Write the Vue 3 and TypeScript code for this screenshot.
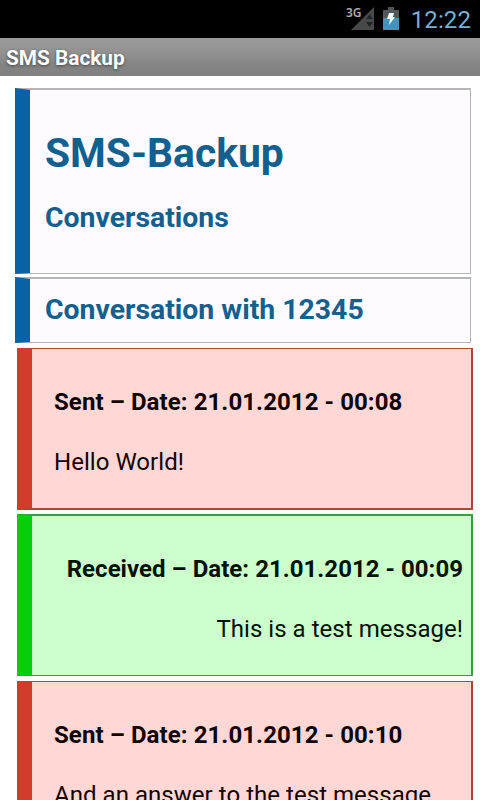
<script setup lang="ts">
interface Message {
  kind: 'sent' | 'received'
  label: string
  date: string
  text: string
}

const messages: Message[] = [
  { kind: 'sent', label: 'Sent', date: '21.01.2012 - 00:08', text: 'Hello World!' },
  { kind: 'received', label: 'Received', date: '21.01.2012 - 00:09', text: 'This is a test message!' },
  { kind: 'sent', label: 'Sent', date: '21.01.2012 - 00:10', text: 'And an answer to the test message' },
]
</script>

<template>
  <div class="screen">
    <div class="status">
      <svg class="signal" width="30" height="28" viewBox="0 0 30 28">
        <path d="M28 2V25H5Z" fill="#484848" />
        <path d="M20 14l3.500-4.500 3.500 4.500zM20 17h7l-3.500 5z" fill="#202426" />
        <text x="0" y="12" class="network">3G</text>
      </svg>
      <svg class="battery" width="16" height="24" viewBox="0 0 16 24">
        <path d="M5 0h6v3h5v8H0V3h5z" fill="#51575a" />
        <path d="M0 11h16v12H0z" fill="#3f96b9" />
        <path d="M6 6h5l-1 4h2l-6 8 1-6H4z" fill="#f4fcff" />
      </svg>
      <span class="clock">12:22</span>
    </div>
    <header class="titlebar"><span>SMS Backup</span></header>
    <main class="page">
      <section class="card intro">
        <h1>SMS-Backup</h1>
        <h2>Conversations</h2>
      </section>
      <section class="card conversation">
        <h2 class="with">Conversation with 12345</h2>
      </section>
      <article v-for="m in messages" :key="m.date" class="message" :class="m.kind">
        <p class="meta">{{ m.label }} – Date: {{ m.date }}</p>
        <p class="body">{{ m.text }}</p>
      </article>
    </main>
  </div>
</template>

<style>
body {
  margin: 0;
  background: #fff;
  overflow: hidden;
}
</style>

<style scoped>
.screen {
  width: 480px;
  height: 800px;
  overflow: hidden;
  background: #fff;
  font-family: Roboto, sans-serif;
  white-space: nowrap;
}
.screen * {
  box-sizing: border-box;
}
.status {
  height: 38px;
  background: #000;
  display: flex;
  justify-content: flex-end;
  padding: 5px 9px 0 0;
}
.signal {
  margin-right: 7px;
}
.network {
  font: 600 12px "Noto Sans", sans-serif;
  fill: #aaa;
}
.battery {
  margin: 2px 12px 0 0;
}
.clock {
  font-size: 24px;
  line-height: 30px;
  letter-spacing: 0.1px;
  color: #78afd2;
}
.titlebar {
  height: 38px;
  padding-left: 6px;
  background: linear-gradient(#9b9b9b, #8e8e8e 50%, #848484 70%, #808080);
  color: #fff;
  font-size: 20.8px;
  font-weight: 700;
  line-height: 40px;
  text-shadow: 0 1px 3px #444;
}
.page {
  padding: 12px 7px 0 15px;
}
h1,
h2,
p {
  margin: 0;
}
.card {
  width: 456px;
  border: 1px solid #b5b5bb;
  border-top-width: 2px;
  border-left: 15px solid #0763a7;
  background: #fdfbff;
  color: #12608f;
  padding-left: 15px;
}
.intro {
  height: 186px;
  padding-top: 38px;
}
.conversation {
  height: 66px;
  margin-top: 3px;
  padding-top: 13px;
}
h1 {
  font-size: 40.8px;
  line-height: 50px;
}
h2 {
  font-size: 28.4px;
  line-height: 36px;
}
.intro h2 {
  margin-top: 22px;
}
.message {
  width: 456px;
  height: 162px;
  margin: 5px 0 0 2px;
  padding: 38px 8px 0 22px;
  border: 2px solid;
  border-left-width: 15px;
  font-size: 24px;
  line-height: 30px;
  color: #100303;
}
.sent {
  background: #ffd8d6;
  border-color: #a8483b;
  border-left-color: #d33c28;
  border-top-width: 1px;
}
.received {
  margin-top: 4px;
  background: #ccffcb;
  border-color: #3c9c44;
  border-left-color: #06ce0c;
  border-bottom-width: 1px;
  color: #031003;
  text-align: right;
}
.meta {
  font-weight: 700;
  letter-spacing: 0.08px;
}
.received .meta {
  letter-spacing: 0.03px;
}
.body {
  margin-top: 30px;
  letter-spacing: 0.04px;
}
</style>
